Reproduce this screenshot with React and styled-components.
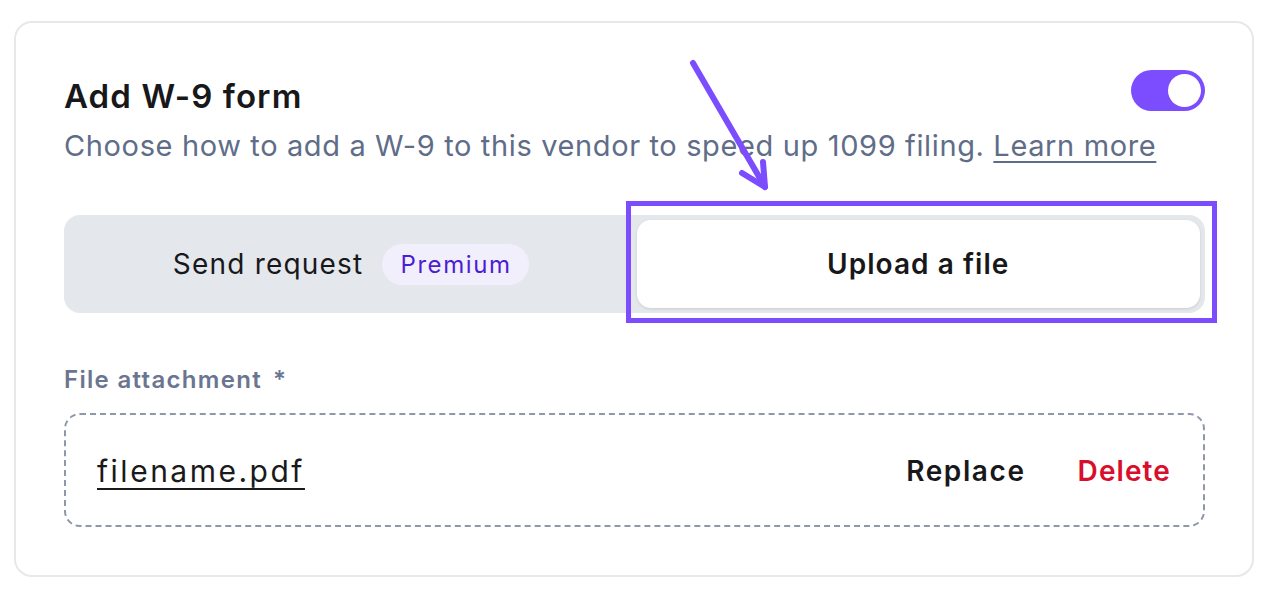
import React from "react";
import styled, { createGlobalStyle } from "styled-components";

const Global = createGlobalStyle`
  html, body { margin: 0; padding: 0; background: #ffffff; }
  body { font-family: "Inter", "Noto Sans", sans-serif; -webkit-font-smoothing: antialiased; }
  * { box-sizing: border-box; }
`;

const Page = styled.div`
  padding: 21px 12px 14px 14px;
`;

const Card = styled.section`
  position: relative;
  width: 1240px;
  border: 2px solid #e6e8ec;
  border-radius: 18px;
  padding: 47px 47px 48px 48px;
  display: flex;
  flex-direction: column;
`;

const HeaderRow = styled.div`
  display: flex;
  justify-content: space-between;
  align-items: flex-start;
`;

const Title = styled.h2`
  margin: 0;
  padding-top: 6px;
  font-size: 33px;
  line-height: 40px;
  font-weight: 600;
  color: #18181b;
  letter-spacing: 1.1px;
`;

const Toggle = styled.button`
  width: 74px;
  height: 41px;
  border: none;
  border-radius: 999px;
  background: #7b4dff;
  padding: 4px;
  display: flex;
  justify-content: ${(p) => (p.$on ? "flex-end" : "flex-start")};
  align-items: center;
  cursor: pointer;
`;

const Knob = styled.span`
  width: 33px;
  height: 33px;
  border-radius: 50%;
  background: #ffffff;
`;

const Subtitle = styled.p`
  margin: 12px 0 0;
  font-size: 29px;
  line-height: 36px;
  color: #5f6d88;
  letter-spacing: 0.63px;
`;

const LearnMore = styled.a`
  color: #5f6d88;
  text-decoration: underline;
  text-underline-offset: 5px;
  text-decoration-thickness: 2px;
`;

const Segmented = styled.div`
  position: relative;
  margin-top: 51px;
  height: 98px;
  background: #e4e7ec;
  border-radius: 16px;
  padding: 5px;
  display: grid;
  grid-template-columns: 1fr 1fr;
  gap: 4px;
`;

const Segment = styled.button`
  border: none;
  border-radius: 14px;
  background: ${(p) => (p.$active ? "#ffffff" : "transparent")};
  box-shadow: ${(p) => (p.$active ? "0 1px 3px rgba(16,24,40,0.12)" : "none")};
  display: flex;
  align-items: center;
  justify-content: center;
  gap: 19px;
  font-family: inherit;
  font-size: 28px;
  font-weight: ${(p) => (p.$active ? 600 : 400)};
  color: #18181b;
  letter-spacing: ${(p) => (p.$active ? "1.05px" : "1.2px")};
  cursor: pointer;
`;

const Badge = styled.span`
  height: 41px;
  padding: 0 17px 0 18px;
  border-radius: 999px;
  background: #f2effd;
  color: #4b1ed3;
  font-size: 24px;
  display: inline-flex;
  align-items: center;
  letter-spacing: 1.6px;
`;

const Highlight = styled.div`
  position: absolute;
  left: 562px;
  top: -14px;
  right: -12px;
  bottom: -10px;
  border: 5px solid #7b4dff;
  pointer-events: none;
`;

const Arrow = styled.svg`
  position: absolute;
  left: 664px;
  top: 27px;
  width: 100px;
  height: 150px;
  overflow: visible;
  pointer-events: none;
`;

const Label = styled.div`
  margin-top: 51px;
  font-size: 24px;
  line-height: 32px;
  font-weight: 600;
  color: #6b7591;
  letter-spacing: 1.3px;
`;

const Asterisk = styled.span`
  margin-left: 11px;
`;

const DropZone = styled.div`
  margin-top: 17px;
  height: 114px;
  border: 2px dashed #8f97aa;
  border-radius: 16px;
  padding: 2px 32px 0 31px;
  display: flex;
  align-items: center;
  justify-content: space-between;
`;

const FileName = styled.a`
  font-size: 30px;
  color: #1a1a1a;
  text-decoration: underline;
  text-underline-offset: 6px;
  text-decoration-thickness: 2px;
  letter-spacing: 2.5px;
`;

const Actions = styled.div`
  display: flex;
  align-items: center;
  gap: 52px;
`;

const ActionButton = styled.button`
  border: none;
  background: none;
  padding: 0;
  font-family: inherit;
  font-size: 28px;
  font-weight: 600;
  letter-spacing: ${(p) => (p.$danger ? "1.1px" : "1.6px")};
  color: ${(p) => (p.$danger ? "#d90e2c" : "#18181b")};
  cursor: pointer;
`;

export default function App() {
  return (
    <>
      <Global />
      <Page>
        <Card>
          <HeaderRow>
            <Title>Add W-9 form</Title>
            <Toggle $on aria-label="Enable W-9">
              <Knob />
            </Toggle>
          </HeaderRow>
          <Subtitle>
            Choose how to add a W-9 to this vendor to speed up 1099 filing.{" "}
            <LearnMore>Learn more</LearnMore>
          </Subtitle>
          <Segmented>
            <Segment>
              Send request <Badge>Premium</Badge>
            </Segment>
            <Segment $active>Upload a file</Segment>
            <Highlight />
          </Segmented>
          <Label>
            File attachment<Asterisk>*</Asterisk>
          </Label>
          <DropZone>
            <FileName>filename.pdf</FileName>
            <Actions>
              <ActionButton>Replace</ActionButton>
              <ActionButton $danger>Delete</ActionButton>
            </Actions>
          </DropZone>
          <Arrow viewBox="0 0 100 150">
            <g stroke="#7b4dff" strokeWidth="6" strokeLinecap="round" strokeLinejoin="round" fill="none">
              <path d="M13 13 L85 137" />
              <path d="M62 123 L85 137 L83 112" />
            </g>
          </Arrow>
        </Card>
      </Page>
    </>
  );
}
